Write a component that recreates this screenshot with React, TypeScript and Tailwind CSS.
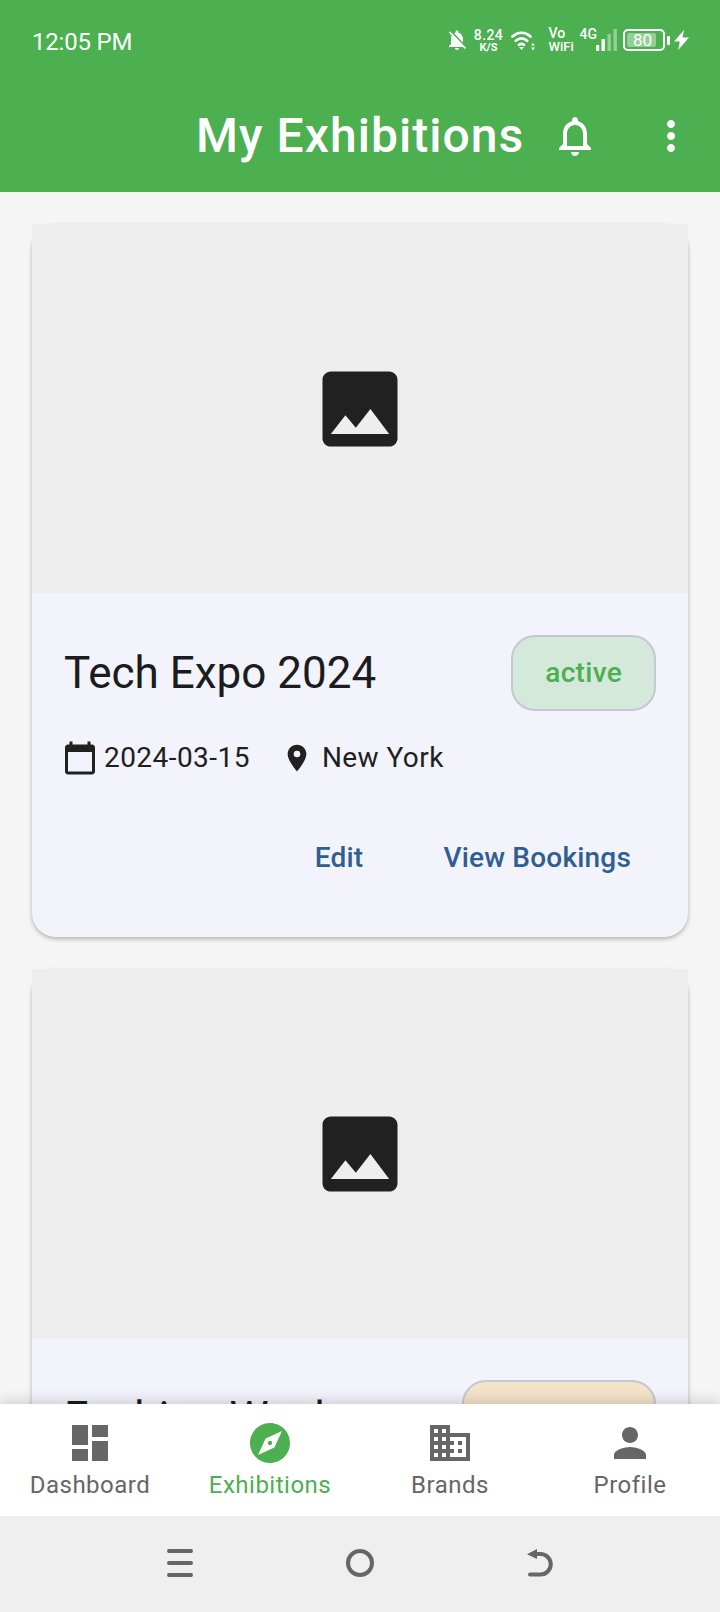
import React from "react";
import {
  MdNotificationsNone,
  MdMoreVert,
  MdImage,
  MdCalendarToday,
  MdLocationOn,
  MdDashboard,
  MdExplore,
  MdDomain,
  MdPerson,
  MdNotificationsOff,
} from "react-icons/md";

function Wifi() {
  return (
    <svg width="25" height="21" viewBox="0 0 25 21" fill="none" stroke="white" strokeWidth="2.7" strokeLinecap="round">
      <path d="M1.5 6.5C7 1.5 14 1.5 19.5 6.5" />
      <path d="M4.8 10.8C8.3 7.8 12.7 7.8 16.2 10.8" />
      <path d="M8 14.8C9.5 13.6 11.5 13.6 13 14.8" />
      <path d="M8 17H13L10.5 20Z" fill="white" stroke="none" />
      <path d="M22 13L24 15.5H20Z M22 20.5L24 17.5H20Z" fill="white" stroke="none" />
    </svg>
  );
}

function Signal() {
  return (
    <svg width="21" height="22" viewBox="0 0 21 22">
      <rect x="0" y="16" width="3.2" height="6" rx="0.5" fill="white" />
      <rect x="5.5" y="10" width="3.4" height="12" rx="0.5" fill="white" />
      <rect x="11.5" y="5" width="3.4" height="17" rx="0.5" fill="#94cf96" />
      <rect x="17.5" y="0" width="3.4" height="22" rx="0.5" fill="#94cf96" />
    </svg>
  );
}

function Bolt() {
  return (
    <svg width="15" height="20" viewBox="0 0 15 20" fill="white">
      <path d="M10 0L0 11.5H5.8L4.2 20L15 7.6H8.6L10 0Z" />
    </svg>
  );
}

function StatusBar() {
  return (
    <div className="h-[80px] flex items-center justify-between pl-[32px] pr-[31px] text-white">
      <span className="text-[24px] leading-none tracking-[-0.2px] mt-[3px]">12:05 PM</span>
      <div className="flex items-center">
        <MdNotificationsOff className="w-[24px] h-[24px] mr-[6px]" />
        <div className="w-[28px] flex flex-col items-center font-medium mr-[8px]">
          <span className="text-[14px] leading-[14px] tracking-[0.4px]">8.24</span>
          <span className="text-[11px] leading-[11px] font-bold">K/S</span>
        </div>
        <div className="mr-[13px] h-[21px]">
          <Wifi />
        </div>
        <div className="w-[24px] flex flex-col font-medium mr-[7px]">
          <span className="text-[14px] leading-[13px]">Vo</span>
          <span className="text-[13px] leading-[13px]">WiFi</span>
        </div>
        <span className="text-[14px] leading-none font-medium self-start mr-[-1px]">4G</span>
        <div className="mr-[6px] h-[22px]">
          <Signal />
        </div>
        <div className="w-[42px] h-[22px] border-2 border-white rounded-[5px] p-[2px] mr-[2px]">
          <div className="relative w-[29px] h-full bg-[#94cf96] rounded-[2px]">
            <span className="absolute left-[6px] top-0 text-[17px] leading-[14px]">80</span>
          </div>
        </div>
        <div className="w-[3px] h-[9px] bg-white rounded-[1px] mr-[4px]" />
        <Bolt />
      </div>
    </div>
  );
}

function AppBar() {
  return (
    <div className="h-[112px] flex items-center pl-[196px] pr-[1px]">
      <span className="text-[48px] leading-none font-medium text-white tracking-[1.05px]">My Exhibitions</span>
      <div className="ml-auto flex text-white">
        <div className="w-[96px] h-[96px] flex items-center justify-center">
          <MdNotificationsNone className="w-[48px] h-[48px]" />
        </div>
        <div className="w-[96px] h-[96px] flex items-center justify-center">
          <MdMoreVert className="w-[48px] h-[48px]" />
        </div>
      </div>
    </div>
  );
}

function Card({
  title,
  status,
  badgeClass,
  date,
  place,
}: {
  title: string;
  status?: string;
  badgeClass: string;
  date?: string;
  place?: string;
}) {
  return (
    <div className="shrink-0 bg-[#f2f3fb] rounded-[24px] shadow-[0_2px_4px_rgba(0,0,0,0.28)]">
      <div className="h-[369px] bg-[#eeeeee] flex items-center justify-center">
        <MdImage className="w-[100px] h-[100px] text-[#212121]" />
      </div>
      <div className="px-[32px] pt-[42px] pb-[61px]">
        <div className="flex items-center justify-between">
          <span className="text-[44px] leading-[52px] text-[#1b1c20]">{title}</span>
          <span
            className={`h-[76px] flex items-center px-[32px] rounded-[24px] border-2 border-[#c3c8d2] text-[28px] font-medium tracking-[0.3px] ${badgeClass}`}
          >
            {status}
          </span>
        </div>
        {date && (
          <>
            <div className="flex items-center mt-[29px] text-[28px] leading-[36px] text-[#1f1f1f] tracking-[0.45px]">
              <MdCalendarToday className="w-[36px] h-[36px] text-[#212121] -ml-[2px]" />
              <span className="ml-[6px]">{date}</span>
              <MdLocationOn className="w-[32px] h-[32px] ml-[31px] text-[#212121]" />
              <span className="ml-[9px]">{place}</span>
            </div>
            <div className="flex justify-end mt-[64px] pr-[25px] text-[28px] leading-[36px] font-medium text-[#2f5f92] tracking-[0.2px]">
              <span>Edit</span>
              <span className="ml-[80px]">View Bookings</span>
            </div>
          </>
        )}
      </div>
    </div>
  );
}

function NavItem({ icon, label, active }: { icon: React.ReactNode; label: string; active?: boolean }) {
  return (
    <div className={`flex flex-col items-center pt-[15px] ${active ? "text-[#4caf50]" : "text-[#666666]"}`}>
      {icon}
      <span className="text-[24px] leading-[32px] tracking-[0.5px] mt-[2px]">{label}</span>
    </div>
  );
}

export default function App() {
  return (
    <div className="w-[720px] h-[1612px] flex flex-col overflow-hidden bg-[#f5f5f5] font-['Roboto',sans-serif]">
      <div className="bg-[#4caf50] shrink-0">
        <StatusBar />
        <AppBar />
      </div>
      <div className="flex-1 min-h-0 overflow-hidden px-[32px] pt-[32px] flex flex-col gap-[32px]">
        <Card
          title="Tech Expo 2024"
          status="active"
          badgeClass="bg-[#d5e9da] text-[#4caf50]"
          date="2024-03-15"
          place="New York"
        />
        <Card title="Fashion Week" badgeClass="w-[194px] bg-[#f5e3c9]" />
      </div>
      <div className="relative shrink-0 h-[112px] bg-white grid grid-cols-4 shadow-[0_-4px_12px_rgba(0,0,0,0.14)]">
        <NavItem icon={<MdDashboard className="w-[48px] h-[48px]" />} label="Dashboard" />
        <NavItem icon={<MdExplore className="w-[48px] h-[48px]" />} label="Exhibitions" active />
        <NavItem icon={<MdDomain className="w-[48px] h-[48px]" />} label="Brands" />
        <NavItem icon={<MdPerson className="w-[48px] h-[48px]" />} label="Profile" />
      </div>
      <div className="relative shrink-0 h-[96px] bg-[#efefef] flex items-center justify-center pb-[2px] text-[#666666]">
        <div className="w-[180px] flex justify-center">
          <svg width="28" height="30" viewBox="0 0 28 30" fill="none" stroke="currentColor" strokeWidth="4" strokeLinecap="round">
            <path d="M3 3H25M3 15H25M3 27H25" />
          </svg>
        </div>
        <div className="w-[180px] flex justify-center">
          <svg width="30" height="30" viewBox="0 0 30 30" fill="none" stroke="currentColor" strokeWidth="4">
            <circle cx="15" cy="15" r="12" />
          </svg>
        </div>
        <div className="w-[180px] flex justify-center">
          <svg width="30" height="30" viewBox="0 0 30 30" fill="none" stroke="currentColor" strokeWidth="4" strokeLinecap="round">
            <path d="M5 26.5H15.5A10.25 10.25 0 0 0 15.5 6H7" />
            <path d="M2 6.3L12 1V11Z" fill="currentColor" stroke="none" />
          </svg>
        </div>
      </div>
    </div>
  );
}
